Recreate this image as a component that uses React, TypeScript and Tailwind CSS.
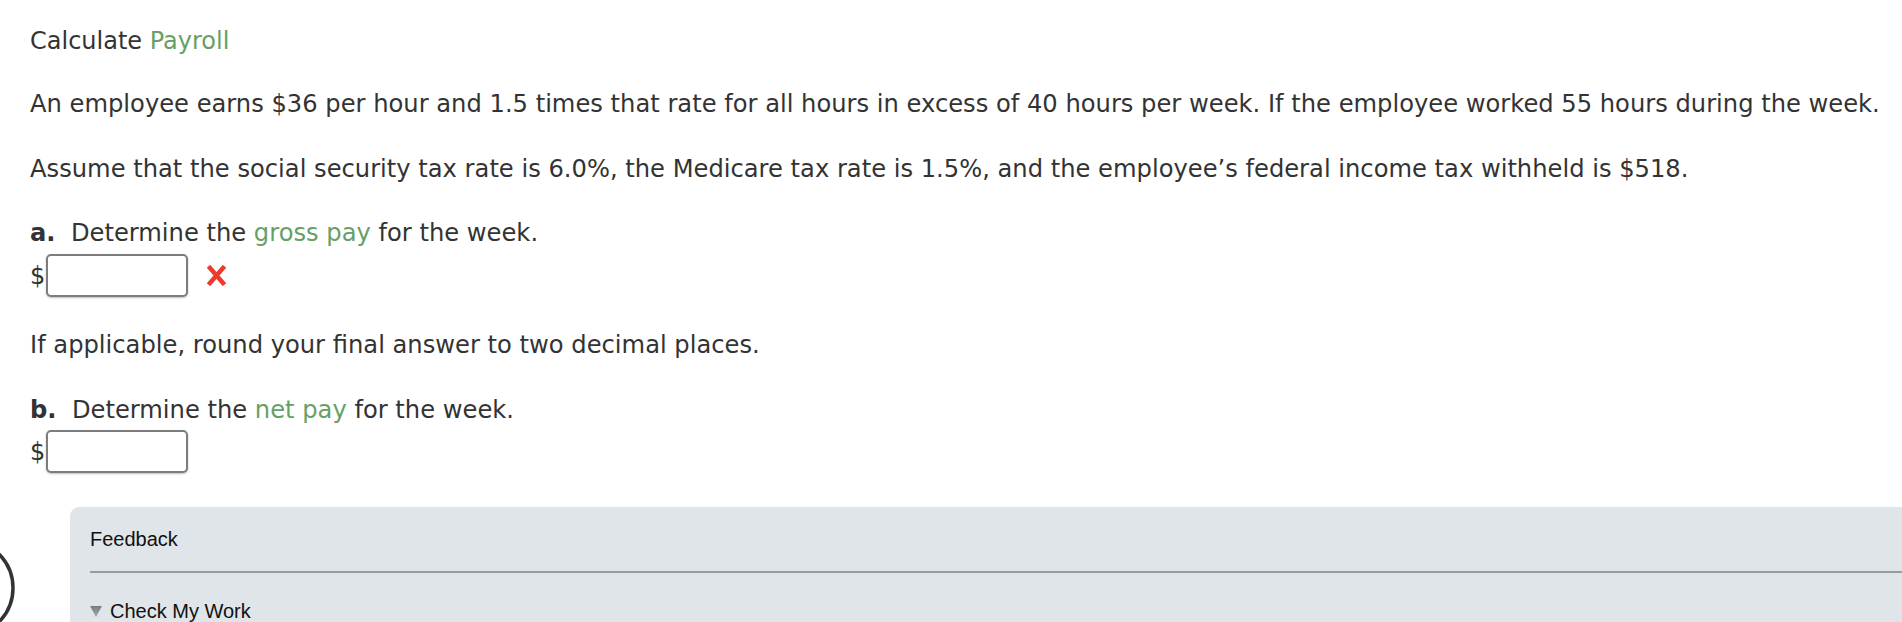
import React from "react";

function Input() {
  return (
    <div className="w-[142px] h-[43px] shrink-0 rounded-[5px] border-2 border-[#7d7d7d] bg-white shadow-[0_1px_2px_rgba(0,0,0,0.25)]" />
  );
}

export default function App() {
  return (
    <div className="relative w-[1902px] h-[622px] overflow-hidden bg-white text-[#333333] font-['DejaVu_Sans',Verdana,sans-serif]">
      <div className="pl-[30px] pt-[27px]">
        <p className="text-[24px] leading-[28px]">
          Calculate <span className="text-[#66a066]">Payroll</span>
        </p>
        <p className="mt-[35px] text-[24.2px] leading-[28px] whitespace-nowrap">
          An employee earns $36 per hour and 1.5 times that rate for all hours in excess of 40 hours per week. If the employee worked 55 hours during the week.
        </p>
        <p className="mt-[37px] text-[24.2px] leading-[28px] whitespace-nowrap">
          Assume that the social security tax rate is 6.0%, the Medicare tax rate is 1.5%, and the employee’s federal income tax withheld is $518.
        </p>
        <p className="mt-[36px] text-[24.2px] leading-[28px]">
          <span className="font-bold">a.</span>&nbsp; Determine the <span className="text-[#66a066]">gross pay</span> for the week.
        </p>
        <div className="mt-[7px] flex items-center text-[24px] leading-[28px]">
          <span className="w-[16px]">$</span>
          <Input />
          <svg className="ml-[19px]" width="19" height="21" viewBox="0 0 19 21">
            <path d="M3 3 L16 18 M16 3 L3 18" stroke="#ec3a2f" strokeWidth="4.5" strokeLinecap="square" fill="none" />
          </svg>
        </div>
        <p className="mt-[34px] text-[24.2px] leading-[28px]">
          If applicable, round your final answer to two decimal places.
        </p>
        <p className="mt-[37px] text-[24.2px] leading-[28px]">
          <span className="font-bold">b.</span>&nbsp; Determine the <span className="text-[#66a066]">net pay</span> for the week.
        </p>
        <div className="mt-[6px] flex items-center text-[24px] leading-[28px]">
          <span className="w-[16px]">$</span>
          <Input />
        </div>
        <div className="-ml-[30px] mt-[34px] flex items-start">
          <svg className="mt-[31px] shrink-0" width="16" height="100" viewBox="0 0 16 100">
            <circle cx="-35" cy="50" r="48" stroke="#333333" strokeWidth="3.5" fill="none" />
          </svg>
          <div className="ml-[54px] flex-1 rounded-tl-[9px] bg-[#dfe5e9] pl-[20px] pt-[21px] pb-[20px] font-['Liberation_Sans',Arial,sans-serif] text-[20px] leading-[22px] text-[#111111]">
            <div>Feedback</div>
            <div className="mt-[21px] h-[2px] bg-[#999c9f]" />
            <div className="mt-[27px] flex items-center">
              <svg width="12" height="11" viewBox="0 0 12 11">
                <defs>
                  <linearGradient id="tg" x1="0" y1="0" x2="0" y2="1">
                    <stop offset="0" stopColor="#7a7a7a" />
                    <stop offset="1" stopColor="#a8a8a8" />
                  </linearGradient>
                </defs>
                <polygon points="0,0 12,0 6,11" fill="url(#tg)" />
              </svg>
              <span className="ml-[8px]">Check My Work</span>
            </div>
          </div>
        </div>
      </div>
    </div>
  );
}
